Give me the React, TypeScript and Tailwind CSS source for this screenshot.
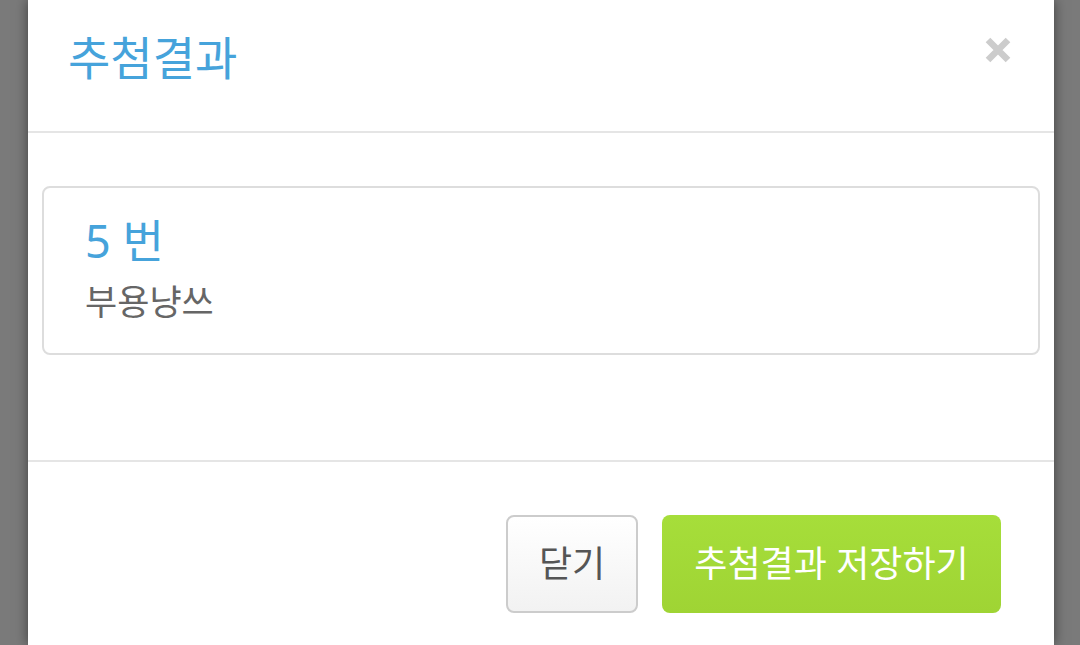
const font = { fontFamily: '"Noto Sans", "Noto Sans CJK KR", sans-serif' }

export default function App() {
  return (
    <div className="h-[645px] w-[1080px] overflow-hidden bg-[#7a7a7a]" style={font}>
      <div className="ml-[28px] flex h-full w-[1026px] flex-col bg-white shadow-[0_0_12px_rgba(0,0,0,0.5)]">
        {/* header */}
        <div className="flex h-[133px] items-start justify-between border-b-2 border-[#e5e5e5] pl-[40px] pr-[43px] pt-[27px]">
          <h4 className="text-[46px] font-normal leading-[60px] text-[#46a3db]">추첨결과</h4>
          <button className="mt-[10px]" aria-label="close">
            <svg width="26" height="26" viewBox="0 0 26 26">
              <path d="M3 3 L23 23 M23 3 L3 23" stroke="#cccccc" strokeWidth="6.5" />
            </svg>
          </button>
        </div>

        {/* body */}
        <div className="h-[329px] border-b-2 border-[#e5e5e5] px-[14px] pt-[53px]">
          <div className="h-[169px] rounded-[8px] border-2 border-[#dddddd] px-[41px] pt-[18px]">
            <div className="text-[45px] leading-[70px] text-[#46a3db]">5 번</div>
            <div className="text-[35px] leading-[52px] text-[#666666]">부용냥쓰</div>
          </div>
        </div>

        {/* footer */}
        <div className="flex justify-end gap-[24px] pr-[53px] pt-[53px]">
          <button className="h-[98px] w-[132px] rounded-[8px] border-2 border-[#cccccc] bg-gradient-to-b from-white to-[#f2f2f2] text-[36px] text-[#555555]">
            닫기
          </button>
          <button className="h-[98px] w-[339px] rounded-[8px] bg-gradient-to-b from-[#a6de3a] to-[#9fd434] text-[36px] text-white">
            추첨결과 저장하기
          </button>
        </div>
      </div>
    </div>
  )
}
